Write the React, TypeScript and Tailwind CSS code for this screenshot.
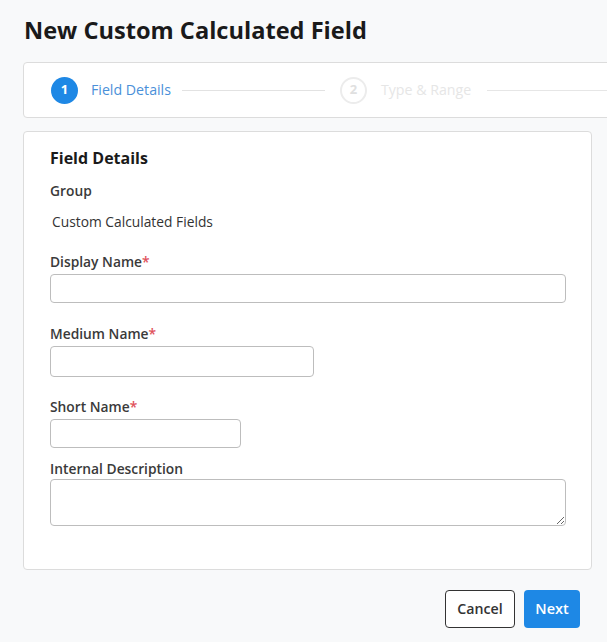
import React from 'react'

const font = { fontFamily: '"Open Sans", "Noto Sans", sans-serif' }

function Label({ text, required }: { text: string; required?: boolean }) {
  return (
    <div className="text-[13.8px] font-semibold text-[#3a3a3a] leading-[20px]">
      {text}
      {required && <span className="text-[#e0505a]">*</span>}
    </div>
  )
}

export default function App() {
  return (
    <div className="h-[642px] w-[607px] overflow-hidden bg-[#f8f9fa] pl-[23px]" style={font}>
      {/* title */}
      <h1 className="pt-[13px] pl-[1px] text-[23.6px] font-bold leading-[34px] text-[#1a1a1a]">
        New Custom Calculated Field
      </h1>

      {/* stepper */}
      <div className="mt-[15px] mr-[-30px] flex h-[56px] items-center rounded-[4px] border border-[#dcdcdc] bg-white pl-[27px]">
        <div className="flex h-[27px] w-[27px] items-center justify-center rounded-full bg-[#1e88e5] text-[13px] font-bold text-white">
          1
        </div>
        <span className="ml-[13px] text-[14.2px] text-[#4a90d9]">Field Details</span>
        <div className="ml-[11px] h-px w-[143px] bg-[#e2e2e2]" />
        <div className="ml-[15px] flex h-[27px] w-[27px] items-center justify-center rounded-full border-2 border-[#ececec] text-[13px] font-bold text-[#e0e0e0]">
          2
        </div>
        <span className="ml-[14px] text-[14.2px] text-[#e6e6e6]">Type &amp; Range</span>
        <div className="ml-[16px] h-px flex-1 bg-[#e6e6e6]" />
      </div>

      {/* form card */}
      <div className="mt-[13px] mr-[15px] h-[439px] rounded-[4px] border border-[#dcdcdc] bg-white pl-[26px] pr-[25px] pt-[14px]">
        <div className="text-[16px] font-bold leading-[24px] text-[#1a1a1a]">Field Details</div>

        <div className="mt-[11px] text-[13.8px] font-semibold leading-[20px] text-[#3a3a3a]">Group</div>
        <div className="mt-[11px] pl-[2px] text-[13.8px] leading-[20px] text-[#333]">Custom Calculated Fields</div>

        <div className="mt-[20px]">
          <Label text="Display Name" required />
          <input className="mt-[2px] block h-[29px] w-full rounded-[4px] border border-[#bdbdbd] bg-white" />
        </div>

        <div className="mt-[21px]">
          <Label text="Medium Name" required />
          <input className="mt-[2px] block h-[31px] w-[264px] rounded-[4px] border border-[#bdbdbd] bg-white" />
        </div>

        <div className="mt-[20px]">
          <Label text="Short Name" required />
          <input className="mt-[2px] block h-[29px] w-[191px] rounded-[4px] border border-[#bdbdbd] bg-white" />
        </div>

        <div className="mt-[11px]">
          <Label text="Internal Description" />
          <textarea className="block h-[47px] w-full resize-y rounded-[4px] border border-[#bdbdbd] bg-white" />
        </div>
      </div>

      {/* actions */}
      <div className="mt-[20px] mr-[27px] flex justify-end gap-[9px]">
        <button className="h-[38px] w-[70px] rounded-[4px] border border-[#333] bg-white text-[14.2px] font-semibold text-[#333]">
          Cancel
        </button>
        <button className="h-[38px] w-[56px] rounded-[4px] bg-[#1e88e5] text-[14.5px] font-semibold text-white">
          Next
        </button>
      </div>
    </div>
  )
}
